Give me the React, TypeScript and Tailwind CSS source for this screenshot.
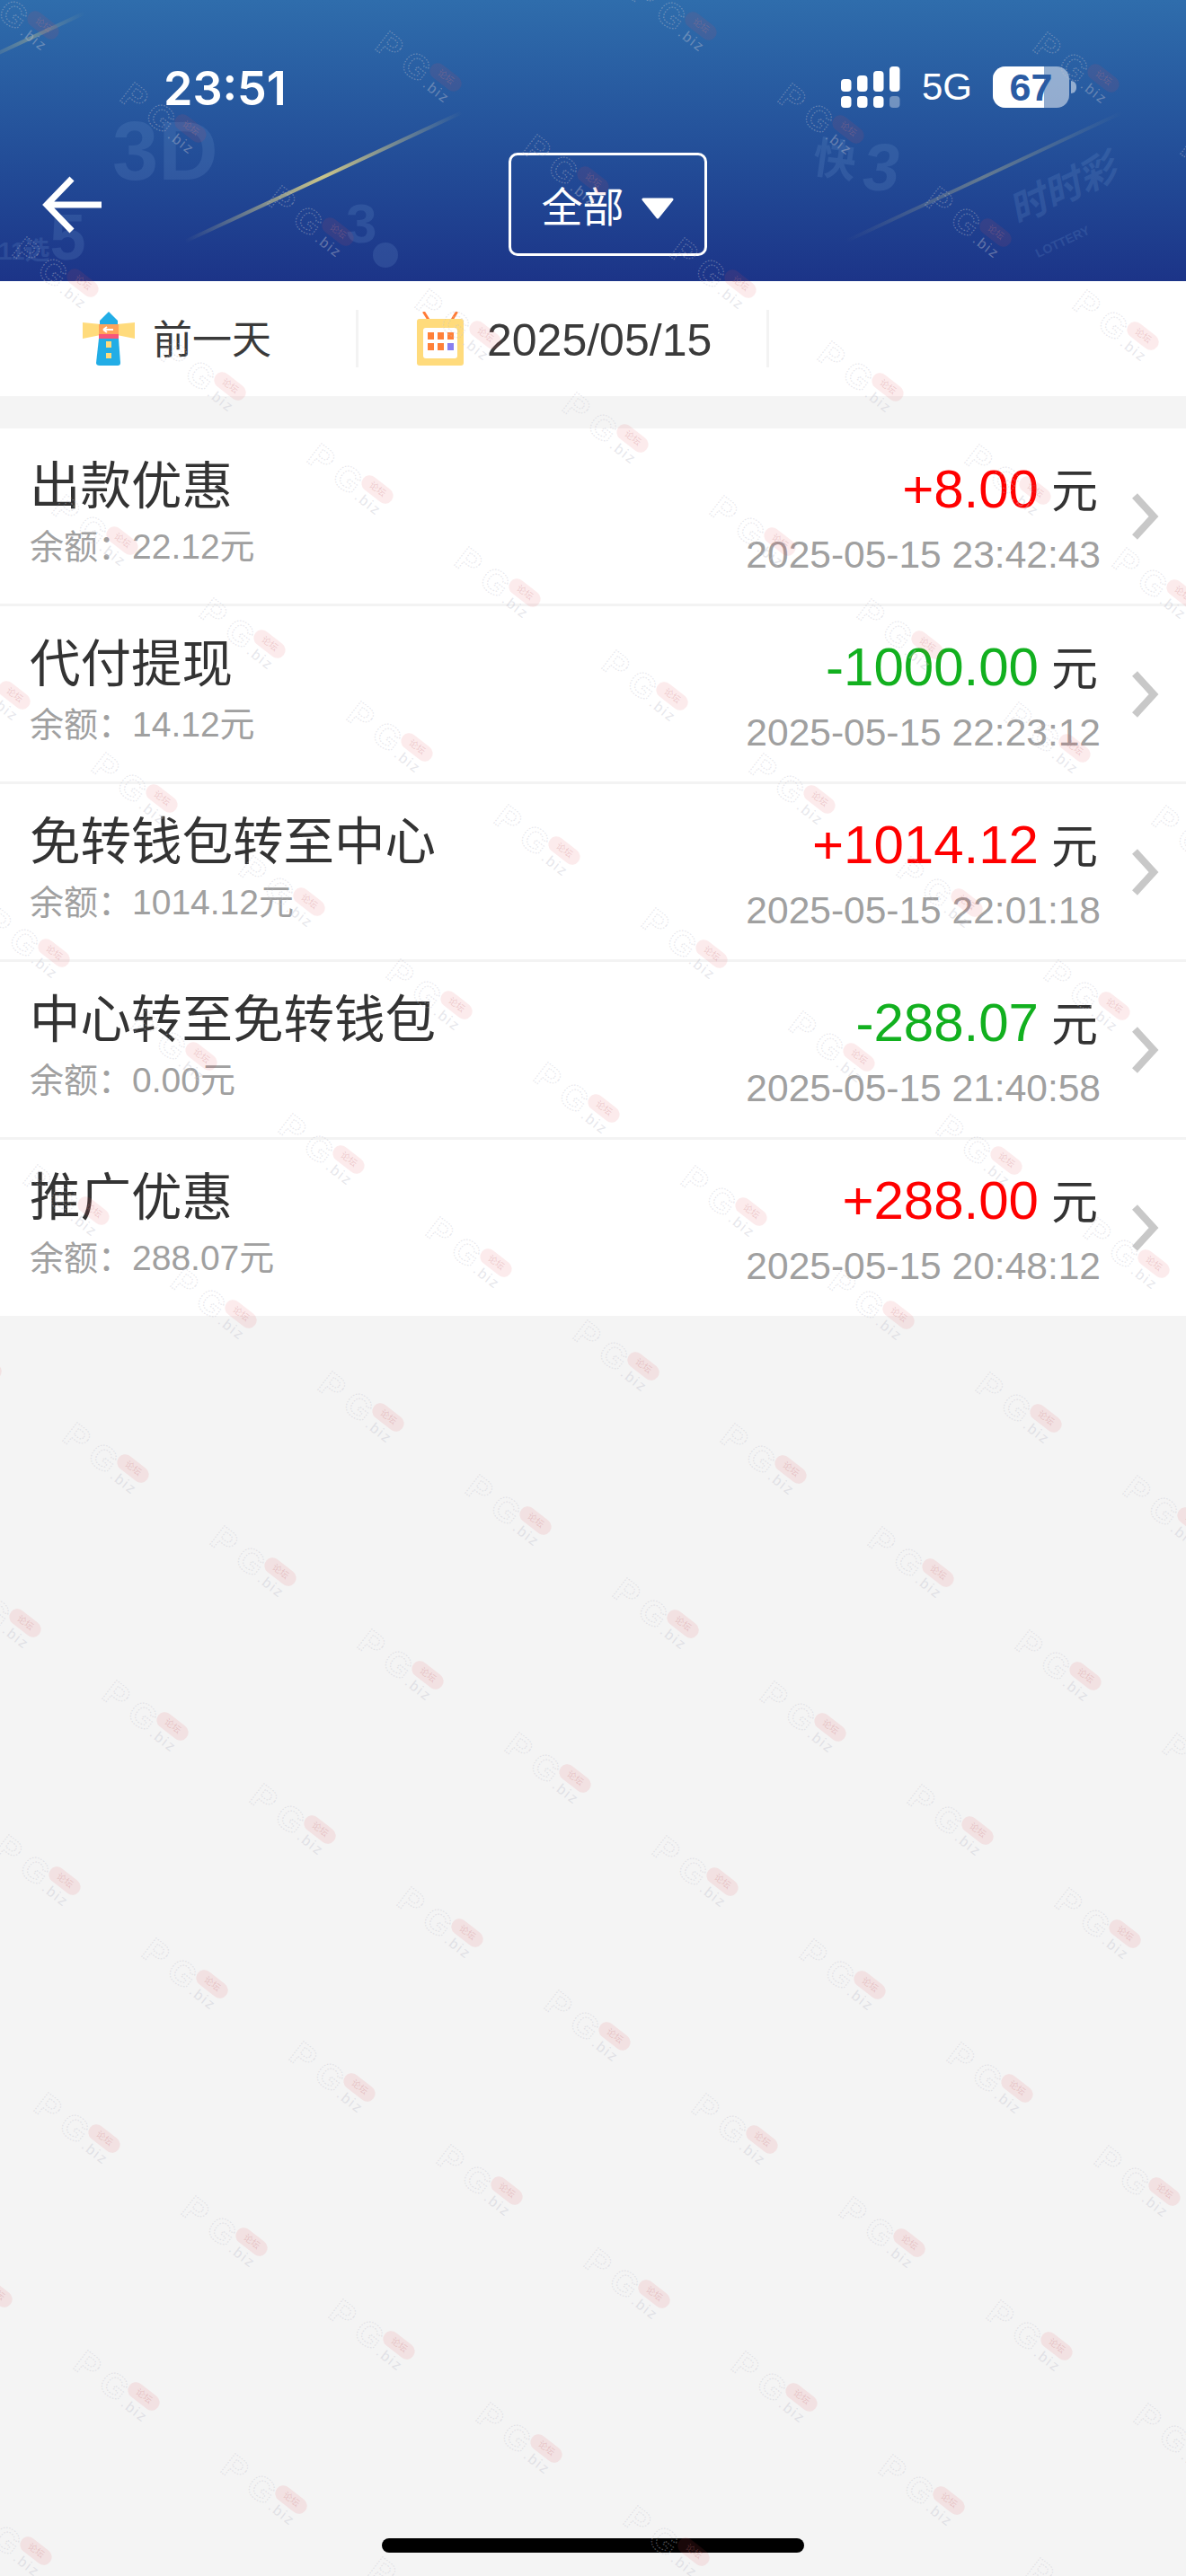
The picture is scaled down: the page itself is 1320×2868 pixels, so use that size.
import type { ReactNode } from "react";

const fontStack = "font-['Liberation_Sans','Noto_Sans_CJK_SC',sans-serif]";

type Record = {
  title: string;
  balance: string;
  amount: string;
  time: string;
  income: boolean;
};

const records: Record[] = [
  { title: "出款优惠", balance: "22.12元", amount: "+8.00", time: "2025-05-15 23:42:43", income: true },
  { title: "代付提现", balance: "14.12元", amount: "-1000.00", time: "2025-05-15 22:23:12", income: false },
  { title: "免转钱包转至中心", balance: "1014.12元", amount: "+1014.12", time: "2025-05-15 22:01:18", income: true },
  { title: "中心转至免转钱包", balance: "0.00元", amount: "-288.07", time: "2025-05-15 21:40:58", income: false },
  { title: "推广优惠", balance: "288.07元", amount: "+288.00", time: "2025-05-15 20:48:12", income: true },
];

// watermark repeats on a skewed lattice across the whole page
function watermarkSpots() {
  const spots: { x: number; y: number }[] = [];
  for (let n = -20; n <= 20; n++) {
    for (let m = -20; m <= 20; m++) {
      const x = 148 + n * 164 - m * 120;
      const y = 1635 + n * 115 + m * 172;
      if (x > -30 && x < 1400 && y > -20 && y < 2900) spots.push({ x, y });
    }
  }
  return spots;
}

function Watermark({ x, y }: { x: number; y: number }) {
  return (
    <svg
      className="absolute overflow-visible"
      style={{ left: x, top: y }}
      width="1"
      height="1"
    >
      <g transform="rotate(38)">
        <rect x="-20" y="-9" width="40" height="18" rx="9" fill="#e64650" fillOpacity="0.11" />
        <text
          x="0"
          y="3"
          textAnchor="middle"
          fontFamily="Noto Sans CJK SC, sans-serif"
          fontSize="10"
          fill="#c87a80"
          fillOpacity="0.3"
        >
          论坛
        </text>
        <g
          fontFamily="Liberation Sans, sans-serif"
          fontWeight="700"
          fontSize="38"
          fill="none"
          stroke="#c4c4d0"
          strokeOpacity="0.42"
          strokeWidth="1.2"
          strokeDasharray="1.6 1.6"
        >
          <text x="-83" y="24">P</text>
          <text x="-48" y="24">G</text>
        </g>
        <text
          x="-15"
          y="24"
          fontFamily="Liberation Sans, sans-serif"
          fontSize="16"
          letterSpacing="2"
          fill="#c4c4d0"
          fillOpacity="0.42"
        >
          .biz
        </text>
      </g>
    </svg>
  );
}

function Streak({ className }: { className: string }) {
  return (
    <div
      className={`absolute h-[4px] -rotate-[25deg] rounded-full bg-gradient-to-r from-transparent via-[#c9c48a] to-transparent ${className}`}
    />
  );
}

function HeaderDecor() {
  return (
    <div className={`pointer-events-none absolute inset-0 overflow-hidden text-[#6d97cf] opacity-20 ${fontStack}`}>
      <span className="absolute left-[125px] top-[122px] text-[92px] font-bold leading-none">3D</span>
      <div className="absolute left-[-2px] top-[228px] flex items-baseline font-bold leading-none">
        <span className="text-[28px]">11选</span>
        <span className="text-[72px]">5</span>
      </div>
      <span className="absolute left-[385px] top-[218px] text-[62px] font-bold leading-none">3</span>
      <div className="absolute left-[415px] top-[270px] h-[28px] w-[28px] rounded-full bg-[#6d97cf]" />
      <span className="absolute left-[905px] top-[155px] rotate-[8deg] text-[48px] font-bold leading-none">快</span>
      <span className="absolute left-[960px] top-[150px] text-[74px] font-bold italic leading-none">3</span>
      <span className="absolute left-[1120px] top-[190px] -rotate-[25deg] text-[42px] font-bold italic leading-none">时时彩</span>
      <span className="absolute left-[1150px] top-[262px] -rotate-[25deg] text-[14px] font-bold leading-none">LOTTERY</span>
    </div>
  );
}

function SignalIcon() {
  const top = [
    { x: 0, y: 14, h: 14 },
    { x: 18, y: 10, h: 18 },
    { x: 36, y: 5, h: 23 },
    { x: 54, y: 0, h: 28 },
  ];
  return (
    <svg width="66" height="46" viewBox="0 0 66 46" fill="white">
      {top.map((b) => (
        <rect key={b.x} x={b.x} y={b.y} width="11.5" height={b.h} rx="4" />
      ))}
      <rect x="0" y="33" width="11.5" height="13" rx="4" />
      <rect x="18" y="33" width="11.5" height="13" rx="4" />
      <rect x="36" y="33" width="11.5" height="13" rx="4" />
      <rect x="54" y="33" width="11.5" height="13" rx="4" opacity="0.35" />
    </svg>
  );
}

function Battery() {
  return (
    <div className="flex items-center">
      <div className="relative flex h-[46px] w-[85px] items-center justify-center overflow-hidden rounded-[14px] bg-white/50">
        <div className="absolute inset-y-0 left-0 w-[57px] bg-white" />
        <span className="relative font-['Liberation_Sans',sans-serif] text-[43px] font-bold leading-none text-[#2a5ba3]">
          67
        </span>
      </div>
      <div className="ml-[2px] h-[14px] w-[6px] rounded-r-full bg-white/50" />
    </div>
  );
}

function LighthouseIcon() {
  return (
    <svg width="58" height="60" viewBox="0 0 58 60">
      <polygon points="0,13 20,15 20,27 0,31" fill="#ffdb7c" transform="translate(0,-1)" />
      <polygon points="58,13 38,15 38,27 58,31" fill="#ffdb7c" transform="translate(0,-1)" />
      <path d="M19 10 L29 0 L39 10 V16 H19 Z" fill="#22ade6" />
      <rect x="18" y="14" width="22" height="12" fill="#ffa35a" />
      <path d="M23 20 H34 M23 20 L27 17 M23 20 L27 23" stroke="white" strokeWidth="2" fill="none" />
      <rect x="18" y="25" width="22" height="5" fill="#f7567a" />
      <path d="M18 30 H40 L42 57 Q42 60 39 60 H19 Q15 60 15 57 Z" fill="#22ade6" />
      <rect x="26" y="33" width="6" height="7" fill="#ffdb7c" />
      <rect x="26" y="46" width="6" height="6" fill="#ffdb7c" />
    </svg>
  );
}

function CalendarIcon() {
  const orange = [
    [12, 23],
    [23, 23],
    [34, 23],
    [12, 35],
    [23, 35],
  ];
  return (
    <svg width="52" height="60" viewBox="0 0 52 60">
      <path d="M8 1 L13 9 M44 1 L39 9" stroke="#ff7a35" strokeWidth="3" strokeLinecap="round" />
      <rect x="0" y="8" width="52" height="52" rx="3" fill="#ffdb7c" />
      <rect x="7" y="18" width="38" height="34" rx="3" fill="white" />
      {orange.map(([x, y]) => (
        <rect key={`${x}-${y}`} x={x} y={y} width="7" height="8" fill="#ff8038" />
      ))}
      <rect x="34" y="35" width="7" height="8" fill="#8a7ff0" />
    </svg>
  );
}

function ToolCell({ icon, label, className }: { icon: ReactNode; label: string; className: string }) {
  return (
    <div className={`flex h-[64px] items-center border-r-[3px] border-[#f3f3f3] ${className}`}>
      {icon}
      {label === "前一天" ? (
        <span className="ml-[20px] mt-[3px] text-[44px] leading-none text-[#3a3a3a]">{label}</span>
      ) : (
        <span className="ml-[26px] mt-[3px] text-[50px] leading-none text-[#3a3a3a]">{label}</span>
      )}
    </div>
  );
}

function RecordRow({ item }: { item: Record }) {
  return (
    <div className="flex h-[198px] items-center border-b-[3px] border-[#f3f3f3] bg-white pl-[33px] pr-[30px] last:h-[196px] last:border-b-0">
      <div className="flex flex-1 flex-col pb-[9px]">
        <span className="text-[56.5px] leading-[64px] text-[#333333]">{item.title}</span>
        <span className="mt-[13px] flex items-baseline leading-[44px] text-[#a0a0a0]">
          <span className="text-[38px]">余额：</span>
          <span className="text-[39px]">{item.balance}</span>
        </span>
      </div>
      <div className="flex flex-col items-end pt-[5px]">
        <div className="flex items-baseline leading-[64px]">
          <span className={`text-[60px] ${item.income ? "text-[#ff0000]" : "text-[#12b01f]"}`}>{item.amount}</span>
          <span className="ml-[14px] text-[52px] text-[#333333]">元</span>
        </div>
        <span className="mr-[-3px] mt-[15px] text-[42.5px] leading-[48px] text-[#a0a0a0]">{item.time}</span>
      </div>
      <svg className="ml-[36px]" width="32" height="54" viewBox="0 0 32 54" fill="none">
        <path d="M5 4 L26 27 L5 50" stroke="#c8c8c8" strokeWidth="8" />
      </svg>
    </div>
  );
}

export default function App() {
  return (
    <div className={`relative flex h-[2868px] w-[1320px] flex-col overflow-hidden bg-[#f4f4f4] ${fontStack}`}>
      <header className="relative h-[313px] shrink-0 bg-gradient-to-b from-[#2f6dac] to-[#1c3488]">
        <HeaderDecor />
        <Streak className="left-[190px] top-[195px] w-[340px]" />
        <Streak className="left-[-30px] top-[40px] w-[130px] opacity-40" />
        <Streak className="left-[925px] top-[195px] w-[340px] opacity-40" />
        <div className="relative flex h-[170px] items-start pt-[71px]">
          <span className="ml-[182px] font-['Inter',sans-serif] text-[52px] font-semibold leading-[56px] text-white">
            23:51
          </span>
          <div className="ml-auto mr-[122px] flex items-center pt-[3px]">
            <SignalIcon />
            <span className="ml-[24px] text-[42px] leading-none text-white">5G</span>
            <div className="ml-[23px]">
              <Battery />
            </div>
          </div>
        </div>
        <div className="relative flex items-center">
          <svg className="ml-[47px]" width="68" height="66" viewBox="0 0 68 66" fill="none">
            <path d="M33 4 L5 33 L33 62 M5 33 H66" stroke="white" strokeWidth="7" />
          </svg>
          <div className="ml-[451px] flex h-[115px] w-[221px] items-center justify-center rounded-[10px] border-[3px] border-white pt-[7px]">
            <span className="text-[46px] leading-none text-white">全部</span>
            <svg className="ml-[18px] mt-[2px]" width="38" height="24" viewBox="0 0 38 24">
              <path d="M3 2 H35 L19 22 Z" fill="white" stroke="white" strokeWidth="3" strokeLinejoin="round" />
            </svg>
          </div>
        </div>
      </header>

      <div className="flex h-[128px] shrink-0 items-center bg-white">
        <ToolCell icon={<LighthouseIcon />} label="前一天" className="w-[399px] pl-[92px]" />
        <ToolCell icon={<CalendarIcon />} label="2025/05/15" className="w-[457px] pl-[65px]" />
      </div>

      <div className="mt-[36px] flex shrink-0 flex-col">
        {records.map((item) => (
          <RecordRow key={item.time} item={item} />
        ))}
      </div>

      <div className="mt-auto flex justify-center pb-[26px]">
        <div className="h-[16px] w-[470px] rounded-full bg-black" />
      </div>

      <div className="pointer-events-none absolute inset-0">
        {watermarkSpots().map((s) => (
          <Watermark key={`${s.x}-${s.y}`} x={s.x} y={s.y} />
        ))}
      </div>
    </div>
  );
}
